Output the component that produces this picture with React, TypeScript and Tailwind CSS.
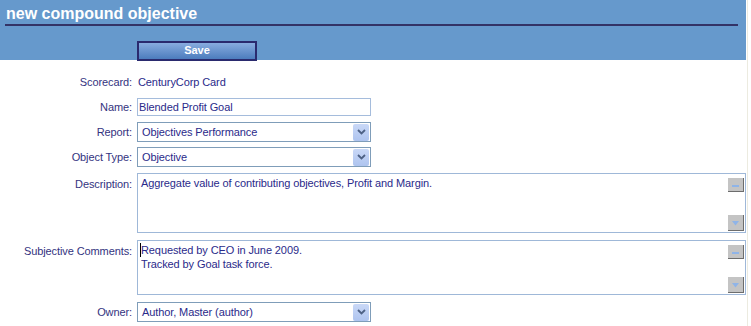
import React from 'react';

const labelCls =
  "w-[137px] shrink-0 text-right text-[11px] tracking-[-0.1px] text-[#333380] pr-[5px]";
const fieldText = "text-[11px] tracking-[-0.1px] text-[#2a2a8a]";

// Little XP-style chevron button at the right of the combo boxes
const DropButton = () => (
  <div className="w-[16px] h-[17px] rounded-[2px] bg-gradient-to-b from-[#c9d8f7] to-[#aec4ef] flex items-center justify-center">
    <svg width="9" height="6" viewBox="0 0 9 6">
      <path d="M1 1 L4.5 4.5 L8 1" fill="none" stroke="#4d6185" strokeWidth="1.8" />
    </svg>
  </div>
);

const Select = ({ value }: { value: string }) => (
  <div className="w-[234px] h-[20px] border border-[#7f9db9] bg-white flex items-center justify-between pl-[4px] pr-[1px]">
    <span className={fieldText}>{value}</span>
    <DropButton />
  </div>
);

// Textarea with the old-style scroll buttons in the corner
const TextArea = ({ lines, height, caret }: { lines: string[]; height: string; caret?: boolean }) => (
  <div className={`relative w-[609px] ${height} border border-[#9fb8d8] bg-white pl-[2px] pt-[2px]`}>
    {lines.map((l, i) => (
      <div key={i} className={`${fieldText} leading-[14px] ${i === 0 && caret ? "border-l border-black" : "pl-[1px]"}`}>
        {l}
      </div>
    ))}
    <div className="absolute right-[1px] top-[4px] w-[16px] h-[14px] bg-[#c4c4c4] border-r border-b border-[#6d6d6d]">
      <svg width="15" height="13" viewBox="0 0 15 13" className="block">
        <rect x="4" y="7" width="7" height="2" fill="#8fb4e8" />
      </svg>
    </div>
    <div className="absolute right-[1px] bottom-[1px] w-[16px] h-[16px] bg-[#c4c4c4] border-r border-b border-[#6d6d6d]">
      <svg width="15" height="15" viewBox="0 0 15 15" className="block">
        <path d="M4 6 L11 6 L7.5 10.5 Z" fill="#8fb4e8" />
      </svg>
    </div>
  </div>
);

export default function App() {
  return (
    <div
      className="w-[751px] h-[326px] bg-white overflow-hidden"
      style={{ fontFamily: '"Liberation Sans", Arial, sans-serif' }}
    >
      <div className="w-[748px] h-full border-r border-[#ecebe0]">
        {/* Header */}
        <div className="w-[746px] h-[60px] bg-[#6699cc] pl-[5px] pr-[8px]">
          <div className="h-[26px] border-b-2 border-[#333366] pl-[1px] pt-[2px]">
            <span className="text-[16px] font-bold text-white leading-[20px]">new compound objective</span>
          </div>
          <div className="pl-[132px] pt-[11px]">
            <button className="w-[120px] h-[20px] border-2 border-[#2a2a6e] bg-gradient-to-b from-[#88acdf] to-[#4c7cbd] text-white text-[11px] font-bold leading-none">
              Save
            </button>
          </div>
        </div>

        {/* Form */}
        <div className="flex flex-col pt-[13px]">
          <div className="flex items-center h-[18px]">
            <div className={labelCls}>Scorecard:</div>
            <div className={`${fieldText} pl-[1px]`}>CenturyCorp Card</div>
          </div>

          <div className="flex items-center h-[18px] mt-[7px]">
            <div className={labelCls}>Name:</div>
            <div className="w-[234px] h-[18px] border border-[#a5bcdc] bg-white flex items-center pl-[1px]">
              <span className={fieldText}>Blended Profit Goal</span>
            </div>
          </div>

          <div className="flex items-center mt-[6px]">
            <div className={labelCls}>Report:</div>
            <Select value="Objectives Performance" />
          </div>

          <div className="flex items-center mt-[5px]">
            <div className={labelCls}>Object Type:</div>
            <Select value="Objective" />
          </div>

          <div className="flex items-start mt-[6px]">
            <div className={`${labelCls} pt-[3px]`}>Description:</div>
            <TextArea
              height="h-[60px]"
              lines={["Aggregate value of contributing objectives, Profit and Margin."]}
            />
          </div>

          <div className="flex items-start mt-[7px]">
            <div className={`${labelCls} pt-[3px]`}>Subjective Comments:</div>
            <TextArea
              height="h-[55px]"
              caret
              lines={["Requested by CEO in June 2009.", "Tracked by Goal task force."]}
            />
          </div>

          <div className="flex items-center mt-[7px]">
            <div className={labelCls}>Owner:</div>
            <Select value="Author, Master (author)" />
          </div>
        </div>
      </div>
    </div>
  );
}
